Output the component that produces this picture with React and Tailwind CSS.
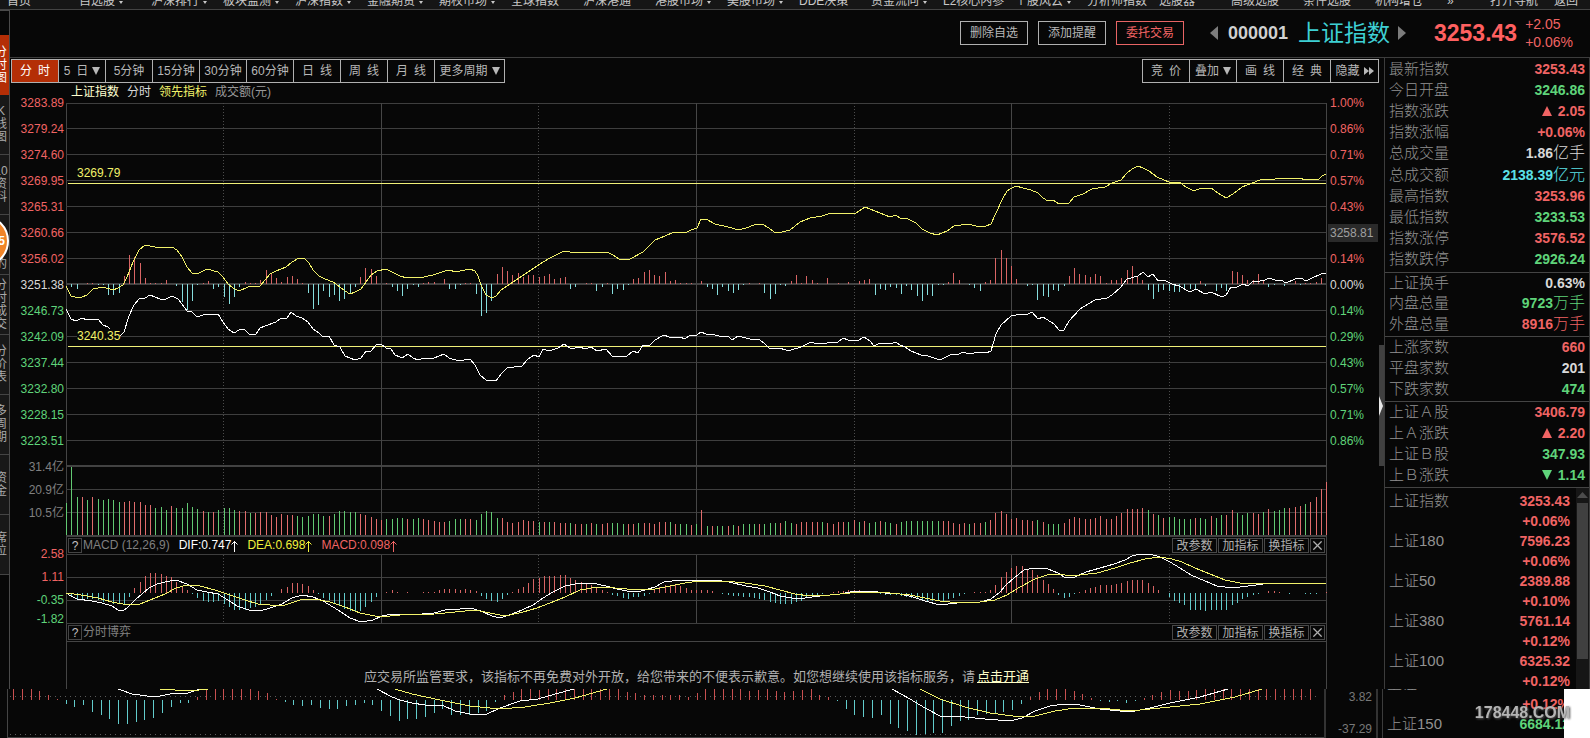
import { X } from 'lucide-react'

const navItems = [
  { label: '首页' },
  { label: '自选股', menu: true },
  { label: '沪深排行', menu: true },
  { label: '板块监测', menu: true },
  { label: '沪深指数', menu: true },
  { label: '金融期货', menu: true },
  { label: '期权市场', menu: true },
  { label: '全球指数' },
  { label: '沪深港通' },
  { label: '港股市场', menu: true },
  { label: '美股市场', menu: true },
  { label: 'DDE决策' },
  { label: '资金流向', menu: true },
  { label: 'L2核心内参' },
  { label: '个股风云', menu: true },
  { label: '分析师指数' },
  { label: '选股器' },
  { label: '高级选股' },
  { label: '条件选股' },
  { label: '机构增仓' },
]

const sideTabs = [
  ['分', '时', '图'],
  ['K', '线', '图'],
  ['10', '资', '料'],
  ['', '', '', '的'],
  ['分', '时', '成', '交'],
  ['分', '价', '表'],
  ['多', '周', '期'],
  ['资', '金'],
  ['席', '位'],
]

const periods = [
  { label: '分\u2002时', active: true },
  { label: '5\u2002日', menu: true },
  { label: '5分钟' },
  { label: '15分钟' },
  { label: '30分钟' },
  { label: '60分钟' },
  { label: '日\u2002线' },
  { label: '周\u2002线' },
  { label: '月\u2002线' },
]

const UP = 'text-[#f06464]'
const DOWN = 'text-[#5fd47a]'
const FLAT = 'text-[#d8d8d8]'
const CYAN = 'text-[#5ce0e6]'

const priceAxis = [
  ['3283.89', UP], ['3279.24', UP], ['3274.60', UP], ['3269.95', UP], ['3265.31', UP],
  ['3260.66', UP], ['3256.02', UP], ['3251.38', FLAT], ['3246.73', DOWN], ['3242.09', DOWN],
  ['3237.44', DOWN], ['3232.80', DOWN], ['3228.15', DOWN], ['3223.51', DOWN],
]

const percentAxis = [
  ['1.00%', UP], ['0.86%', UP], ['0.71%', UP], ['0.57%', UP], ['0.43%', UP],
  ['3258.81', 'cursor'], ['0.14%', UP], ['0.00%', FLAT], ['0.14%', DOWN], ['0.29%', DOWN],
  ['0.43%', DOWN], ['0.57%', DOWN], ['0.71%', DOWN], ['0.86%', DOWN],
]

const quoteGroups = [
  {
    height: 'h-[215px]',
    rows: [
      { name: '最新指数', value: '3253.43', color: UP },
      { name: '今日开盘', value: '3246.86', color: DOWN },
      { name: '指数涨跌', value: '2.05', color: UP, arrow: 'up' },
      { name: '指数涨幅', value: '+0.06%', color: UP },
      { name: '总成交量', value: '1.86', unit: '亿手', color: FLAT },
      { name: '总成交额', value: '2138.39', unit: '亿元', color: CYAN },
      { name: '最高指数', value: '3253.96', color: UP },
      { name: '最低指数', value: '3233.53', color: DOWN },
      { name: '指数涨停', value: '3576.52', color: UP },
      { name: '指数跌停', value: '2926.24', color: DOWN },
    ],
  },
  {
    height: 'h-16',
    rows: [
      { name: '上证换手', value: '0.63%', color: FLAT },
      { name: '内盘总量', value: '9723', unit: '万手', color: DOWN },
      { name: '外盘总量', value: '8916', unit: '万手', color: UP },
    ],
  },
  {
    height: 'h-[65px]',
    rows: [
      { name: '上涨家数', value: '660', color: UP },
      { name: '平盘家数', value: '201', color: FLAT },
      { name: '下跌家数', value: '474', color: DOWN },
    ],
  },
  {
    height: 'h-[86px]',
    rows: [
      { name: '上证Ａ股', value: '3406.79', color: UP },
      { name: '上Ａ涨跌', value: '2.20', color: UP, arrow: 'up' },
      { name: '上证Ｂ股', value: '347.93', color: DOWN },
      { name: '上Ｂ涨跌', value: '1.14', color: DOWN, arrow: 'down' },
    ],
  },
]

const indices = [
  ['上证指数', '3253.43', '+0.06%'],
  ['上证180', '7596.23', '+0.06%'],
  ['上证50', '2389.88', '+0.10%'],
  ['上证380', '5761.14', '+0.12%'],
  ['上证100', '6325.32', '+0.12%'],
]

// one value per minute bar, three units to a pixel
const momentum = [
  0, -10, -16, 0, 2, 2, -3, -3, -32, -34, -26, 25, 88, 82, 62, 19, 2, 2, 2, 13,
  0, -6, -55, -77, -52, -4, 4, 10, -14, -10, -40, -60, -40, -10, 7, 2, 2, 12, 42, 33,
  19, 7, 22, 25, 16, 4, -28, -76, -62, -20, -38, -34, -52, -46, -28, -8, 22, 48, 46, 25,
  0, 3, -10, -22, -36, -14, -4, -8, 2, 7, 7, 0, 16, -14, -14, -2, 4, 4, -30, -96,
  -88, -50, 30, 52, 40, 26, 34, 20, 28, 26, 22, 25, 31, 14, 19, 22, -14, -8, 0, 3,
  2, -22, -8, 4, -31, -16, -19, -4, 16, 19, 35, 43, 28, 25, 37, 10, 13, 1, 1, 1,
  0, 10, -10, -16, -34, -10, -22, -26, -19, -4, 3, 0, 2, -28, -46, -31, -2, -7, 10, 28,
  4, 25, 13, 4, 0, 19, 0, 3, 0, 7, 0, 10, 13, 16, -34, -16, -19, -8, -12, -30,
  -7, -19, -37, -52, -34, -37, -4, -3, 7, 34, 13, 0, -2, -13, -22, 7, 13, 79, 103, 79,
  55, 16, 0, -7, -2, -49, -37, -40, -19, -22, -7, 25, 49, 31, 28, 22, 31, 25, 2, 13,
  13, 19, 43, 55, 22, 13, -19, -46, -25, -19, -22, -25, -25, -19, -16, -16, 10, -7, 0, -22,
  -13, -22, 40, 37, 28, 13, 13, 31, 13, -10, -4, 0, -7, 0, 10, -4, 4, 4, 7, 19, 0,
]

// turnover, negative for a falling minute
const turnover = [
  -97, -205, -115, 115, -106, 115, -108, -106, -108, -106, -100, 100, 103, 100, 98, 91, 91, -82, -85, -76,
  88, -82, -82, -97, -85, -79, 73, -70, 70, -76, -82, -82, -76, 73, 73, -67, 67, 70, 70, 61,
  55, 64, 61, 61, -58, -55, -58, -64, -64, -58, 58, -64, -72, -73, -70, -70, 64, 61, 55, 49,
  46, -49, -49, -52, -52, 49, -49, -52, 49, 46, 43, 40, 40, -43, -49, -49, 49, 49, -46, -64,
  -73, -70, -52, 50, 38, 36, 38, 46, 41, 41, -38, 38, -40, 38, 36, 36, -36, 34, 34, -34,
  36, -32, 34, 36, -36, -36, -34, 34, 32, -36, 36, 36, 34, 40, 38, -38, 34, -34, -33, 30,
  -33, 75, -26, 28, -28, -27, 27, -30, 27, -33, -33, -32, 33, -32, -36, -36, 36, -42, -36, 34,
  38, 38, 38, 38, -38, 36, 34, 38, 40, -38, 44, -40, 41, -36, -38, 42, -38, -36, 34, -38,
  -43, -43, -43, -43, -43, -43, -43, 43, 42, 36, 34, 36, -34, 36, 36, -40, 45, 66, 72, 62,
  48, 51, 45, 45, 42, -45, 39, -33, -33, -33, 36, 48, 54, 51, 48, 48, 51, 57, 48, 48,
  57, 66, 78, 78, 78, 81, -75, 63, -60, 51, -54, -54, -48, -48, -48, 51, -51, -48, 57, -51,
  -60, 60, 76, -66, -60, -66, 66, 63, -69, 78, -72, -75, -81, 81, 84, 87, -93, 99, 114, 138, 159,
]

const macd = [
  0, -8, -18, -20, -18, -18, -22, -26, -28, -32, -34, -32, -12, 14, 34, 50, 59, 59, 56, 50,
  48, 32, 22, 8, -2, -16, -24, -26, -28, -24, -34, -42, -50, -50, -50, -44, -42, -34, -20, -8,
  0, 12, 18, 29, 29, 26, 20, 8, -3, -14, -22, -30, -38, -48, -55, -58, -54, -42, -28, -12,
  0, 4, 8, 4, 0, 3, 0, 0, 3, 3, 4, 8, 13, 13, 12, 9, 12, 9, 5, -8,
  -18, -24, -26, -17, -6, 2, 13, 19, 30, 42, 46, 52, 52, 52, 55, 55, 46, 40, 34, 30,
  25, 17, 9, 4, -5, -10, -14, -17, -13, -11, -8, -2, 8, 17, 23, 25, 25, 22, 14, 9,
  9, 9, 8, 6, 0, -3, -6, -9, -10, -13, -13, -15, -17, -22, -28, -30, -32, -32, -32, -28,
  -24, -16, -10, -6, -4, 0, 3, 5, 6, 8, 8, 8, 6, 4, 0, -3, -5, -5, -7, -8,
  -11, -14, -19, -22, -23, -23, -24, -24, -17, -14, -8, -3, 0, 4, 4, 4, 8, 24, 47, 62,
  75, 80, 80, 73, 68, 53, 40, 26, 12, -6, -16, -12, -4, 3, 8, 16, 19, 23, 23, 24,
  26, 29, 36, 39, 39, 39, 29, 22, 8, 0, -12, -24, -31, -37, -50, -50, -52, -55, -52, -52,
  -52, -50, -37, -29, -17, -13, -6, -3, 0, 5, 5, 2, 0, -3, 0, 0, -3, -2, -2, 0, 2,
]

const lowerBars = [
  34, 34, 34, 28, 14, 4, -12, -20, -16, -36, -44, -56, -72, -72, -66, -60, -54, -38, -20, -10,
  -8, 10, 34, 34, 34, 34, 34, 34, 28, 20, 3, -6, -14, -18, -14, -24, -26, -26, -18, -14,
  -8, -15, -34, -48, -62, -58, -56, -52, -38, -28, -44, -46, -46, -40, -34, -6, 14, 24, 34, 34,
  30, 34, 34, 34, 34, 34, 34, 34, 34, 34, 24, 22, 14, 14, 14, 14, 16, 10, 20, 32,
  34, 34, 34, 34, 27, 30, 34, 28, 25, 28, 30, 34, 16, 10, -2, -26, -46, -50, -54, -46,
  -72, -84, -93, -105, -102, -100, -98, -77, -62, -59, -46, -43, -41, -35, -29, -11, 8, 25, 32, 34,
  34, 28, 17, 6, -2, -5, -4, -9, -3, 5, 14, 24, 30, 28, 28, 29, 32, 34, 34, 34,
  34, 34, 34, 34, 34, 34, 34, 34, 34,
]

const leadLine =
  '66,286 71,296 75,297 82,297 87,295 93,289 103,287 113,290 118,288 123,285 127,277 133,262 139,250 145,245 155,247 172,247 177,250 182,257 187,267 192,273 199,273 207,269 218,272 223,277 228,284 233,288 239,291 248,287 260,286 265,280 270,274 276,271 286,267 292,262 299,258 305,259 309,263 313,270 319,276 325,279 333,282 340,287 345,291 350,294 355,292 361,289 366,282 371,275 377,271 386,269 394,273 400,276 407,278 424,277 433,275 445,271 450,270 455,272 470,269 475,271 478,276 481,285 486,295 492,298 496,296 501,290 513,282 528,272 543,262 550,258 564,251 570,252 583,253 597,252 602,253 607,252 613,255 619,259 624,260 630,259 643,252 650,245 655,240 665,236 674,232 685,233 691,230 697,228 701,219 706,219 715,224 728,227 739,230 749,227 756,224 762,224 769,228 774,232 782,232 790,230 800,222 810,218 822,216 828,214 856,213 865,207 875,211 885,215 890,217 896,215 900,218 906,218 916,223 922,229 930,233 937,235 947,231 954,226 969,224 979,227 986,226 991,224 996,213 1002,200 1007,191 1012,188 1016,186 1023,188 1031,190 1038,193 1043,198 1048,201 1053,200 1059,204 1064,203 1069,203 1074,197 1083,194 1092,189 1105,187 1112,183 1121,180 1127,173 1132,169 1138,166 1143,168 1149,171 1157,177 1164,180 1169,182 1179,182 1186,187 1194,191 1201,188 1211,188 1218,193 1226,198 1233,194 1242,187 1252,183 1260,180 1275,179 1299,178 1306,180 1314,179 1319,179 1322,176 1326,174'

const indexLine =
  '66,309 71,319 76,321 82,318 87,320 98,319 103,325 108,327 112,332 117,335 121,335 124,332 129,316 134,305 139,299 145,298 150,295 160,299 166,299 172,296 178,299 182,304 187,311 192,312 197,317 203,315 218,314 223,322 228,329 234,333 239,330 244,329 249,334 256,334 260,328 265,326 276,322 281,318 287,318 291,312 296,316 302,318 308,322 313,329 319,333 323,337 329,336 334,345 340,347 345,356 350,358 355,360 361,358 366,351 371,351 376,345 381,344 386,348 391,349 395,355 400,357 402,358 408,354 413,358 418,360 424,358 434,358 444,354 449,358 459,361 470,359 475,365 480,375 486,380 496,381 501,374 507,368 522,366 528,359 534,355 539,357 543,349 549,351 558,348 564,344 570,348 575,348 580,347 585,349 591,347 597,351 606,349 612,356 627,356 633,351 638,353 643,345 650,345 655,340 664,335 669,337 680,337 685,339 690,335 697,335 701,332 706,334 712,334 722,337 728,336 732,340 738,336 750,339 760,340 765,344 769,348 779,348 786,350 791,350 801,347 811,342 817,344 838,342 843,338 848,340 859,340 864,337 870,341 874,346 880,343 890,344 896,342 900,345 905,347 911,351 921,355 928,356 937,359 942,359 950,355 959,354 963,352 969,354 979,352 986,353 991,351 996,334 1001,325 1011,316 1016,315 1028,314 1032,312 1038,319 1043,317 1054,324 1059,330 1064,330 1069,321 1080,309 1095,300 1107,298 1112,295 1121,287 1127,279 1138,276 1143,272 1148,277 1153,274 1158,281 1164,280 1172,284 1179,286 1190,292 1196,289 1205,294 1211,292 1222,297 1226,295 1231,287 1237,287 1243,284 1248,286 1253,281 1260,281 1265,280 1269,278 1275,280 1281,280 1286,283 1295,279 1301,278 1306,281 1312,278 1321,274 1326,273'

const difLine =
  '66,593 71,596 77,599 92,601 102,603 112,606 118,610 123,611 128,607 135,600 142,594 149,588 157,584 165,582 176,580 187,584 197,590 207,592 218,594 228,600 237,606 249,610 260,611 270,608 282,604 292,598 302,595 313,597 323,601 338,610 350,618 361,622 373,620 382,616 392,614 410,615 434,613 445,610 460,609 470,608 481,611 492,616 500,618 512,614 522,610 533,605 543,598 553,592 565,586 575,584 592,583 606,586 617,589 627,591 641,591 655,587 664,582 680,580 697,580 715,580 729,582 746,586 758,588 770,592 780,596 792,598 805,598 820,596 840,594 855,591 870,591 885,593 900,594 913,597 925,601 940,605 957,603 980,602 991,599 1000,592 1006,585 1014,578 1024,570 1034,568 1048,569 1058,573 1064,577 1075,577 1086,572 1100,568 1114,564 1125,560 1132,556 1140,554 1150,554 1160,557 1170,562 1180,568 1191,575 1205,581 1217,586 1225,587 1240,587 1256,585 1270,583 1326,583'

const deaLine =
  '66,593 81,595 98,598 112,602 128,605 140,604 150,600 165,594 176,588 187,585 200,586 215,590 230,595 245,600 258,604 270,605 285,605 300,600 315,599 330,602 345,607 360,613 380,617 400,615 435,614 455,612 475,610 490,613 500,615 510,615 523,612 537,608 550,603 565,597 580,590 597,587 615,588 638,590 655,589 670,586 685,583 700,581 725,581 745,583 765,586 780,590 795,594 810,596 830,595 850,593 870,592 890,593 910,595 925,598 940,601 960,603 980,602 995,600 1007,595 1020,587 1035,579 1050,574 1065,575 1080,575 1097,573 1115,568 1130,563 1145,559 1160,557 1172,559 1182,562 1195,568 1210,574 1225,580 1240,583 1260,583 1326,583'

const lowerWhite = [
  '118,689 132,694 155,697 165,695 175,693 188,693 200,689',
  '377,689 392,697 400,700 412,703 425,705 442,705 455,711 470,714 487,714 500,708 520,701 538,699 555,694 574,689',
  '892,689 910,699 925,708 940,716 965,717 985,719 1010,721 1022,718 1035,711 1050,706 1065,704 1080,705 1100,709 1130,712 1150,708 1170,703 1200,697 1228,689',
]

const lowerYellow = [
  '160,689 175,690 190,691 208,689',
  '395,689 412,694 440,700 470,706 500,709 525,707 550,703 575,698 607,689',
  '920,689 940,699 965,707 990,713 1013,716 1035,716 1055,711 1075,708 1100,708 1130,711 1160,708 1200,704 1235,697 1262,689',
]

// builds one path for all the bars of the wanted sign
function bars(values, sign, start, step, base, flip) {
  return values
    .map((v, i) => {
      if (v * sign <= 0) return ''
      const x = Math.round(start + i * step) + 0.5
      const height = Math.max(1, Math.round(Math.abs(v) / 3))
      return flip && v < 0 ? `M${x} ${base}v${height}` : `M${x} ${base}v${-height}`
    })
    .join('')
}

function Bars({ values, up, down, start = 66, step = 5.25, base, flip = true }) {
  return (
    <g fill="none" strokeWidth="1">
      <path d={bars(values, 1, start, step, base, flip)} stroke={up} vectorEffect="non-scaling-stroke" />
      <path d={bars(values, -1, start, step, base, flip)} stroke={down} vectorEffect="non-scaling-stroke" />
    </g>
  )
}

function Line({ points, color }) {
  return <polyline points={points} fill="none" stroke={color} strokeWidth="1" vectorEffect="non-scaling-stroke" />
}

function Verticals({ from, to }) {
  return (
    <>
      <path
        d={[381.5, 696.5, 1011.5].map((x) => `M${x} ${from}V${to}`).join('')}
        stroke="#464646"
        vectorEffect="non-scaling-stroke"
      />
      <path
        d={[223.5, 538.5, 854.5, 1169.5].map((x) => `M${x} ${from}V${to}`).join('')}
        stroke="#4c4c4c"
        strokeDasharray="1 2"
        vectorEffect="non-scaling-stroke"
      />
    </>
  )
}

function PriceChart() {
  const rows = [103, 128, 154, 180, 206, 232, 258, 310, 336, 362, 388, 414, 440, 489, 512]
  return (
    <svg
      className="block w-full h-[434px] overflow-visible"
      viewBox="67 103 1259 434"
      preserveAspectRatio="none"
      shapeRendering="crispEdges"
      role="img"
      aria-label="分时走势"
    >
      <path d={rows.map((y) => `M66 ${y + 0.5}H1326`).join('')} stroke="#3e3e3e" vectorEffect="non-scaling-stroke" />
      <path d="M66 284H1326M66 466H1326M66 536H1326" stroke="#424242" strokeWidth="2" vectorEffect="non-scaling-stroke" />
      <Verticals from={103} to={535} />
      <Bars values={turnover} up="#e06c6c" down="#62c872" base={535} flip={false} />
      <Bars values={momentum} up="#d86464" down="#86dede" base={284} />
      <path d="M68 183.5H1326M68 346.5H1326" stroke="#f0f078" vectorEffect="non-scaling-stroke" />
      <Line points={leadLine} color="#f2f26a" />
      <Line points={indexLine} color="#ffffff" />
    </svg>
  )
}

function MacdChart() {
  return (
    <svg
      className="block w-full h-[70px] overflow-visible"
      viewBox="67 554 1259 70"
      preserveAspectRatio="none"
      shapeRendering="crispEdges"
      role="img"
      aria-label="MACD"
    >
      <path
        d="M66 554.5H1326M66 577.5H1326M66 600.5H1326M66 623.5H1326"
        stroke="#3e3e3e"
        vectorEffect="non-scaling-stroke"
      />
      <Verticals from={555} to={623} />
      <Bars values={macd} up="#d86464" down="#62cccc" base={593} />
      <Line points={difLine} color="#ffffff" />
      <Line points={deaLine} color="#f2f26a" />
    </svg>
  )
}

function LowerChart() {
  return (
    <svg
      className="block min-w-0 flex-1 h-[49px]"
      viewBox="8 689 1316 49"
      preserveAspectRatio="none"
      shapeRendering="crispEdges"
      aria-hidden="true"
    >
      <path d="M10 696.5H1320M10 734.5H1320" stroke="#5a5a5a" strokeDasharray="1 4" vectorEffect="non-scaling-stroke" />
      <path d="M8 737.5H1324" stroke="#444" vectorEffect="non-scaling-stroke" />
      <Bars values={lowerBars} up="#c85050" down="#62cccc" start={13} step={8.765} base={700} />
      {lowerWhite.map((points) => (
        <Line key={points} points={points} color="#ffffff" />
      ))}
      {lowerYellow.map((points) => (
        <Line key={points} points={points} color="#f2f26a" />
      ))}
    </svg>
  )
}

function Caret() {
  return (
    <svg className="w-2 h-2.5" viewBox="0 0 8 10" fill="currentColor" aria-hidden="true">
      <path d="M0 1h8L4 9z" />
    </svg>
  )
}

function Trend({ dir }) {
  return (
    <svg className="w-2.5 h-2.5" viewBox="0 0 10 10" fill="currentColor" aria-hidden="true">
      <path d={dir === 'up' ? 'M5 0l5 10H0z' : 'M0 0h10L5 10z'} />
    </svg>
  )
}

function Rise() {
  return (
    <svg className="w-[7px] h-3" viewBox="0 0 7 12" fill="none" stroke="currentColor" aria-hidden="true">
      <path d="M3.500 1v11M0.500 4.500l3-3 3 3" />
    </svg>
  )
}

function TopNav() {
  return (
    <nav className="flex items-end h-2.5 pl-[7px] pr-3 pb-0.5 overflow-hidden whitespace-nowrap bg-[#161616] border-b border-[#444] leading-3 text-[#c8c8c8]">
      {navItems.map((item) => (
        <a key={item.label} href="#" className="flex items-end gap-1 w-18 shrink-0">
          {item.label}
          {item.menu && (
            <svg className="w-1 h-2" viewBox="0 0 4 8" fill="currentColor" aria-hidden="true">
              <path d="M0 2h4L2 5z" />
            </svg>
          )}
        </a>
      ))}
      <span className="flex-1">»</span>
      <a href="#" className="mr-4">打开导航</a>
      <a href="#">返回</a>
    </nav>
  )
}

function SideBar() {
  return (
    <div className="relative w-2.5 shrink-0 overflow-hidden border-t border-r border-[#4a4a4a] pt-6">
      {sideTabs.map((chars, i) => (
        <button
          key={i}
          type="button"
          className={
            i === 0
              ? 'flex w-full h-15 pr-0.5 items-center justify-end bg-[#b42e06] text-white leading-[13px]'
              : 'flex w-full h-15 pr-0.5 items-center justify-end bg-[#181818] border-b border-[#444] text-[#aaa] leading-[13px]'
          }
        >
          <span className="flex flex-col w-3 shrink-0 items-center">
            {chars.map((c, n) => (
              <span key={n} className="block min-h-[13px]">{c}</span>
            ))}
          </span>
        </button>
      ))}
      <span className="absolute top-[204px] right-0 flex w-13 h-13 items-center justify-end pr-0.5 rounded-full border-2 border-white bg-[#f08428] font-bold text-white">
        5
      </span>
    </div>
  )
}

function Header() {
  return (
    <header className="flex items-center justify-end h-12 pr-[17px] pb-px border-b border-[#3c3c3c]">
      <div className="flex gap-2.5">
        <button type="button" className="w-17 h-6 border border-[#b0b0b0] text-[#b8b8b8]">删除自选</button>
        <button type="button" className="w-17 h-6 border border-[#b0b0b0] text-[#b8b8b8]">添加提醒</button>
        <button type="button" className="w-17 h-6 border border-[#e86464] text-[#f06464]">委托交易</button>
      </div>
      <button type="button" aria-label="上一个" className="ml-[26px] text-[#7c7c7c]">
        <svg className="w-2 h-4" viewBox="0 0 8 16" fill="currentColor"><path d="M8 1v14L0 8z" /></svg>
      </button>
      <span className="ml-2.5 text-lg font-bold text-[#d0d0d0]">000001</span>
      <h1 className="ml-2.5 text-[23px] leading-8 text-[#3ed0d4]">上证指数</h1>
      <button type="button" aria-label="下一个" className="ml-2 text-[#7c7c7c]">
        <svg className="w-2 h-4" viewBox="0 0 8 16" fill="currentColor"><path d="M0 1v14l8-7z" /></svg>
      </button>
      <span className="ml-7 text-[23px] leading-8 font-bold text-[#ff6060]">3253.43</span>
      <div className="ml-2 text-sm leading-[18px] text-[#f06464]">
        <div>+2.05</div>
        <div>+0.06%</div>
      </div>
    </header>
  )
}

function Toolbar() {
  return (
    <div className="flex justify-between pl-px pt-px text-[#b8b8b8]">
      <div className="flex h-6 border border-[#b0b0b0] divide-x divide-[#b0b0b0]">
        {periods.map((p) => (
          <button
            key={p.label}
            type="button"
            className={
              p.active
                ? 'w-[47px] bg-[#b42e06] text-white'
                : 'flex w-[47px] items-center justify-center gap-1'
            }
          >
            {p.label}
            {p.menu && <Caret />}
          </button>
        ))}
        <button type="button" className="flex w-[69px] items-center justify-center gap-1">
          更多周期
          <Caret />
        </button>
      </div>
      <div className="flex h-6 border border-[#b0b0b0] divide-x divide-[#b0b0b0]">
        <button type="button" className="w-[47px]">{'竞\u2002价'}</button>
        <button type="button" className="flex w-[47px] items-center justify-center gap-1">
          叠加
          <Caret />
        </button>
        <button type="button" className="w-[47px]">{'画\u2002线'}</button>
        <button type="button" className="w-[47px]">{'经\u2002典'}</button>
        <button type="button" className="flex w-[47px] items-center justify-center gap-1">
          隐藏
          <svg className="w-2.5 h-2" viewBox="0 0 10 8" fill="currentColor" aria-hidden="true">
            <path d="M0 0l5 4-5 4zM5 0l5 4-5 4z" />
          </svg>
        </button>
      </div>
    </div>
  )
}

function PanelHead({ children }) {
  return (
    <div className="flex items-center justify-between h-[17px] px-px leading-[17px]">
      <div className="flex items-center gap-px text-[#808080]">
        <button type="button" aria-label="说明" className="w-3.5 h-[15px] border border-[#444] leading-[14px] text-[#c0c0c0]">
          ?
        </button>
        {children}
      </div>
      <div className="flex gap-px text-[#b0b0b0]">
        <button type="button" className="w-[45px] h-[15px] border border-[#484848] leading-[14px]">改参数</button>
        <button type="button" className="w-[45px] h-[15px] border border-[#484848] leading-[14px]">加指标</button>
        <button type="button" className="w-[45px] h-[15px] border border-[#484848] leading-[14px]">换指标</button>
        <button type="button" aria-label="关闭" className="flex w-[15px] h-[15px] items-center justify-center border border-[#484848]">
          <X size={15} strokeWidth={2} className="shrink-0" />
        </button>
      </div>
    </div>
  )
}

function Charts() {
  return (
    <div className="flex">
      <div className="flex flex-col w-14 shrink-0 pt-[7px] pr-0.5 text-right">
        {priceAxis.map(([label, color]) => (
          <span key={label} className={`h-[26px] leading-[26px] ${color}`}>{label}</span>
        ))}
        <div className="flex flex-col pt-0.5 leading-[23px] text-[#808080]">
          <span>31.4亿</span>
          <span>20.9亿</span>
          <span>10.5亿</span>
        </div>
        <div className={`flex flex-col pt-[18px] leading-[23px] ${UP}`}>
          <span>2.58</span>
          <span>1.11</span>
          <span className={DOWN}>-0.35</span>
          <span className={`leading-[14px] ${DOWN}`}>-1.82</span>
        </div>
      </div>

      <div className="min-w-0 flex-1">
        <div className="flex items-center gap-2 h-5 pl-[5px] pb-0.5 text-[#989898]">
          <span className="text-[#ffffd0]">上证指数</span>
          <span className="text-[#d8d8d8]">分时</span>
          <span className="text-[#f2f26a]">领先指标</span>
          <span>成交额(元)</span>
        </div>
        <div className="relative border-x border-[#444]">
          <PriceChart />
          <span className="absolute left-2.5 top-[62px] leading-4 text-[#f2f26a]">3269.79</span>
          <span className="absolute left-2.5 top-[226px] bg-[#070707] leading-[14px] text-[#f2f26a]">3240.35</span>
          <PanelHead>
            <span>MACD (12,26,9)</span>
            <span className="flex items-center ml-2 text-white">DIF:0.747<Rise /></span>
            <span className="flex items-center ml-2 text-[#f2f23c]">DEA:0.698<Rise /></span>
            <span className="flex items-center ml-2 text-[#f06464]">MACD:0.098<Rise /></span>
          </PanelHead>
          <MacdChart />
          <PanelHead>
            <span>分时博弈</span>
          </PanelHead>
          <div className="flex h-12 items-end justify-center gap-0.5 pb-1 border-t border-[#444] text-[13px] leading-4 text-[#b0b0b0]">
            <span>应交易所监管要求，该指标不再免费对外开放，给您带来的不便表示歉意。如您想继续使用该指标服务，请</span>
            <a href="#" className="text-[#ffffc8] underline">点击开通</a>
          </div>
        </div>
      </div>

      <div className="flex flex-col w-13 shrink-0 pt-[7px]">
        {percentAxis.map(([label, color], i) =>
          color === 'cursor' ? (
            <span key={i} className="flex h-[26px] items-center pl-px">
              <span className="w-[50px] pl-0.5 bg-[#2a2a2a] leading-[18px] text-[#a0a0a0]">{label}</span>
            </span>
          ) : (
            <span key={i} className={`h-[26px] pl-[3px] leading-[26px] ${color}`}>{label}</span>
          )
        )}
      </div>
    </div>
  )
}

function QuotePanel() {
  return (
    <aside className="w-[206px] shrink-0 border-x border-[#3c3c3c]">
      {quoteGroups.map((group) => (
        <dl key={group.height} className={`grid auto-rows-fr pl-1 pr-1 pb-0.5 border-b border-[#444] ${group.height}`}>
          {group.rows.map((row) => (
            <div key={row.name} className="flex items-center justify-between leading-5">
              <dt className="text-[15px] leading-5 font-light text-[#929292]">{row.name}</dt>
              <dd className={`flex items-center text-sm leading-5 font-bold ${row.color}`}>
                {row.arrow && <span className="mr-1.5"><Trend dir={row.arrow} /></span>}
                {row.value}
                {row.unit && <span className="text-base leading-5 font-light">{row.unit}</span>}
              </dd>
            </div>
          ))}
        </dl>
      ))}
      <div className="flex h-[201px] overflow-hidden">
        <ul className="flex-1 pt-[3px] pl-1 pr-1.5">
          {indices.map(([name, price, change]) => (
            <li key={name} className="grid grid-cols-2 leading-5">
              <span className="text-[15px] leading-5 font-light text-[#929292]">{name}</span>
              <span className="text-right text-sm leading-5 font-bold text-[#f06464]">{price}</span>
              <span className="col-start-2 text-right text-sm leading-5 font-bold text-[#f06464]">{change}</span>
            </li>
          ))}
        </ul>
        <div className="w-[13px] px-px pt-1 bg-[#161616]">
          <svg className="w-full h-1.5 text-[#4c4c4c]" viewBox="0 0 11 6" fill="currentColor" aria-hidden="true">
            <path d="M5.500 0L11 6H0z" />
          </svg>
          <div className="mt-[5px] h-39 bg-[#404040]" />
        </div>
      </div>
    </aside>
  )
}

function LowerStrip() {
  return (
    <div className="flex h-[49px] overflow-hidden">
      <div className="w-2 shrink-0 border-r border-[#444]" />
      <LowerChart />
      <div className="flex flex-col justify-between w-[54px] shrink-0 pr-1 border-x-2 border-[#333] text-right leading-[17px] text-[#787878]">
        <span>3.82</span>
        <span>-37.29</span>
      </div>
      <div className="relative w-[208px] ml-1 shrink-0 overflow-hidden border-l border-[#3c3c3c] pl-1 pr-5">
        <div className="flex h-[5px] items-end overflow-hidden text-[15px] leading-5 font-light text-[#929292]">上证</div>
        <div className="text-right text-sm leading-5 font-bold text-[#f06464]">+0.12%</div>
        <div className="flex justify-between text-sm leading-5 font-bold text-[#5fd47a]">
          <span className="text-[15px] leading-5 font-light text-[#929292]">上证150</span>
          <span>6684.12</span>
        </div>
        <div className="absolute right-0 top-0 w-6.5 h-full bg-white" />
        <span className="absolute right-5 top-3 text-base leading-6 font-bold text-[#b4b4b4] drop-shadow-[1px_1px_1px_#555]">
          178448.COM
        </span>
      </div>
    </div>
  )
}

export default function App() {
  return (
    <div className="bg-[#070707] font-['Liberation_Sans','Noto_Sans_CJK_SC',sans-serif] text-xs">
      <TopNav />
      <div className="flex">
        <SideBar />
        <div className="min-w-0 flex-1">
          <Header />
          <div className="flex">
            <main className="min-w-0 flex-1">
              <Toolbar />
              <Charts />
            </main>
            <div className="w-[5px] shrink-0 pt-[287px]">
              <button type="button" aria-label="收起" className="flex w-full h-[121px] items-center bg-[#404040] text-[#e8e8e8]">
                <svg className="w-1 h-5" viewBox="0 0 4 20" fill="currentColor"><path d="M0 0l4 10-4 10z" /></svg>
              </button>
            </div>
            <QuotePanel />
          </div>
        </div>
      </div>
      <LowerStrip />
    </div>
  )
}
